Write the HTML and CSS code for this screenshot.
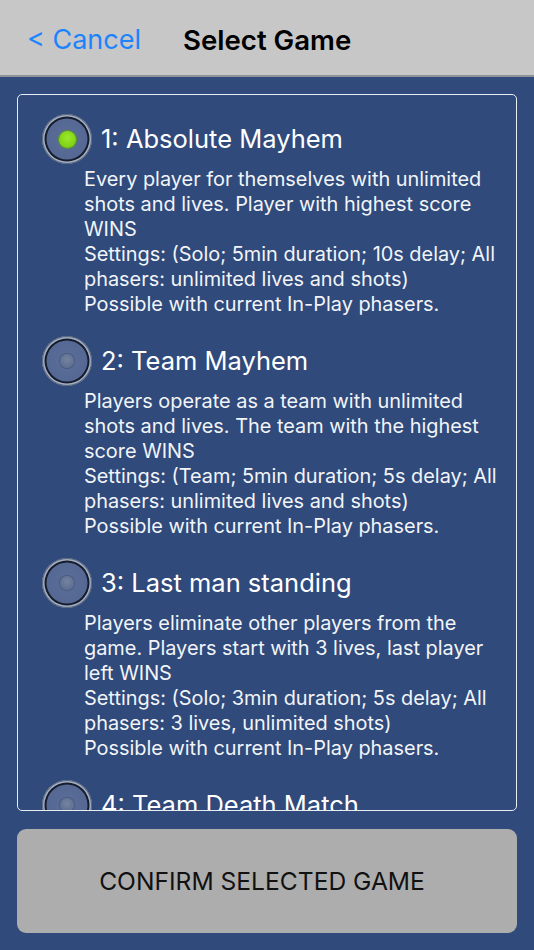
FILE: index.html
```html
<!DOCTYPE html>
<html>
<head>
<meta charset="utf-8">
<link rel="stylesheet" href="styles.css">
</head>
<body>
<div class="screen">
  <header class="navbar">
    <span class="cancel">&lt; Cancel</span>
    <span class="title">Select Game</span>
  </header>
  <main class="content">
    <div class="panel">
      <div class="item">
        <div class="item-head">
          <span class="radio selected"><span class="dot"></span></span>
          <span class="item-title">1: Absolute Mayhem</span>
        </div>
        <p class="desc">Every player for themselves with unlimited shots and lives. Player with highest score WINS<br>Settings: (Solo; 5min duration; 10s delay; All phasers: unlimited lives and shots)<br>Possible with current In-Play phasers.</p>
      </div>
      <div class="item">
        <div class="item-head">
          <span class="radio"><span class="dot"></span></span>
          <span class="item-title">2: Team Mayhem</span>
        </div>
        <p class="desc">Players operate as a team with unlimited shots and lives. The team with the highest score WINS<br>Settings: (Team; 5min duration; 5s delay; All phasers: unlimited lives and shots)<br>Possible with current In-Play phasers.</p>
      </div>
      <div class="item">
        <div class="item-head">
          <span class="radio"><span class="dot"></span></span>
          <span class="item-title">3: Last man standing</span>
        </div>
        <p class="desc">Players eliminate other players from the game. Players start with 3 lives, last player left WINS<br>Settings: (Solo; 3min duration; 5s delay; All phasers: 3 lives, unlimited shots)<br>Possible with current In-Play phasers.</p>
      </div>
      <div class="item">
        <div class="item-head">
          <span class="radio"><span class="dot"></span></span>
          <span class="item-title">4: Team Death Match</span>
        </div>
        <p class="desc">Players operate as a team with 3 lives each. The last team standing WINS<br>Settings: (Team; 5min duration; 5s delay; All phasers: 3 lives, unlimited shots)<br>Possible with current In-Play phasers.</p>
      </div>
    </div>
    <button class="confirm"><span class="confirm-label">CONFIRM SELECTED GAME</span></button>
  </main>
</div>
</body>
</html>
```
FILE: styles.css
```css
* { box-sizing: border-box; }
html, body { margin: 0; padding: 0; }
body {
  width: 534px;
  height: 950px;
  overflow: hidden;
  font-family: Inter, "Noto Sans", "Liberation Sans", sans-serif;
  background: #2f4a7b;
}
.screen {
  display: flex;
  flex-direction: column;
  height: 950px;
}
.navbar {
  height: 77px;
  background: #c7c7c7;
  border-bottom: 2px solid #8d929b;
  display: flex;
  align-items: center;
  padding: 4px 0 0 27px;
  flex-shrink: 0;
}
.cancel {
  color: #1b84fc;
  font-size: 27px;
  width: 156px;
}
.title {
  color: #000;
  font-size: 27.6px;
  font-weight: 600;
}
.content {
  flex: 1;
  display: flex;
  flex-direction: column;
  padding: 17px 17px 18px 17px;
  gap: 18px;
}
.panel {
  height: 717px;
  border: 1.5px solid #e8ecf3;
  border-radius: 5px;
  overflow: hidden;
  padding: 19px 10px 0 24px;
  display: flex;
  flex-direction: column;
  gap: 19px;
  flex-shrink: 0;
}
.item-head {
  display: flex;
  align-items: center;
  gap: 9px;
  height: 50px;
}
.radio {
  width: 50px;
  height: 50px;
  border-radius: 50%;
  flex-shrink: 0;
  background: radial-gradient(circle, #5a6e99 0%, #50648f 100%);
  box-shadow: 0 0 0 1px #56657f inset, 0 0 0 2.5px #a3aec4 inset, 0 0 0 4.5px #151c2c inset;
  display: flex;
  align-items: center;
  justify-content: center;
}
.dot {
  width: 14px;
  height: 14px;
  border-radius: 50%;
  background: radial-gradient(circle at 50% 40%, #75839f 0%, #5f6f92 70%);
  box-shadow: 0 0 0 1px #4a5a7e;
}
.radio.selected .dot {
  width: 17px;
  height: 17px;
  background: radial-gradient(circle at 50% 40%, #9ae82c 0%, #7fd214 70%, #6fbd10 100%);
  box-shadow: 0 0 0 1px #5f9a1a;
}
.item-title {
  color: #fff;
  font-size: 25.5px;
  line-height: 30px;
}
.desc {
  margin: 3px 0 0 42px;
  color: #f2f4f8;
  font-size: 19.9px;
  line-height: 25px;
}
.confirm {
  height: 104px;
  border: none;
  border-radius: 9px;
  background: #adadad;
  color: #111;
  font-family: Inter, "Noto Sans", "Liberation Sans", sans-serif;
  padding: 0 10px 0 0;
  display: flex;
  align-items: center;
  justify-content: center;
}
.confirm-label {
  font-size: 24.6px;
  line-height: 30px;
}
```
